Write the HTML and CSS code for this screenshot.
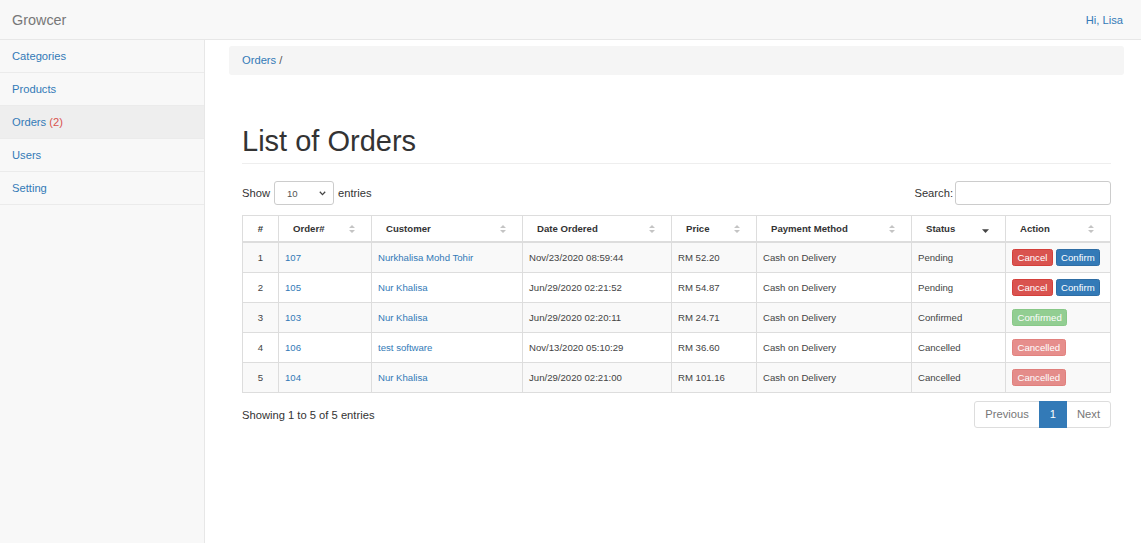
FILE: index.html
```html
<!DOCTYPE html>
<html lang="en">
<head>
<meta charset="utf-8">
<title>Growcer - Orders</title>
<link rel="stylesheet" href="styles.css">
</head>
<body>
<header class="navbar">
  <span class="brand">Growcer</span>
  <a class="greeting" href="#">Hi, Lisa</a>
</header>
<div class="layout">
  <nav class="sidebar">
    <a class="nav-item" href="#">Categories</a>
    <a class="nav-item" href="#">Products</a>
    <a class="nav-item active" href="#">Orders <span class="count">(2)</span></a>
    <a class="nav-item" href="#">Users</a>
    <a class="nav-item" href="#">Setting</a>
  </nav>
  <main class="main">
    <div class="breadcrumb"><a href="#">Orders</a> <span class="sep">/</span></div>
    <div class="content">
      <div class="page-header"><h1>List of Orders</h1></div>
      <div class="toolbar">
        <div class="length">
          <span>Show</span>
          <div class="select"><span>10</span>
            <svg width="7" height="5" viewBox="0 0 7 5"><path d="M0.8 0.8 L3.5 3.6 L6.2 0.8" fill="none" stroke="#444" stroke-width="1.3"/></svg>
          </div>
          <span>entries</span>
        </div>
        <div class="search"><span>Search:</span><div class="input"></div></div>
      </div>
      <table class="orders">
        <colgroup>
          <col style="width:36px"><col style="width:93px"><col style="width:151px"><col style="width:149px"><col style="width:85px"><col style="width:155px"><col style="width:94px"><col style="width:105px">
        </colgroup>
        <thead>
          <tr>
            <th class="num">#</th>
            <th>Order#<svg class="sort" width="6" height="9" viewBox="0 0 6 9"><path d="M0 3.6 L3 0.4 L6 3.6Z M0 5.4 L3 8.6 L6 5.4Z" fill="#c4c4c4"/></svg></th>
            <th>Customer<svg class="sort" width="6" height="9" viewBox="0 0 6 9"><path d="M0 3.6 L3 0.4 L6 3.6Z M0 5.4 L3 8.6 L6 5.4Z" fill="#c4c4c4"/></svg></th>
            <th>Date Ordered<svg class="sort" width="6" height="9" viewBox="0 0 6 9"><path d="M0 3.6 L3 0.4 L6 3.6Z M0 5.4 L3 8.6 L6 5.4Z" fill="#c4c4c4"/></svg></th>
            <th>Price<svg class="sort" width="6" height="9" viewBox="0 0 6 9"><path d="M0 3.6 L3 0.4 L6 3.6Z M0 5.4 L3 8.6 L6 5.4Z" fill="#c4c4c4"/></svg></th>
            <th>Payment Method<svg class="sort" width="6" height="9" viewBox="0 0 6 9"><path d="M0 3.6 L3 0.4 L6 3.6Z M0 5.4 L3 8.6 L6 5.4Z" fill="#c4c4c4"/></svg></th>
            <th>Status<svg class="sort" width="7" height="9" viewBox="0 0 7 9"><path d="M0 4.8 L3.5 8.4 L7 4.8Z" fill="#444"/></svg></th>
            <th>Action<svg class="sort" width="6" height="9" viewBox="0 0 6 9"><path d="M0 3.6 L3 0.4 L6 3.6Z M0 5.4 L3 8.6 L6 5.4Z" fill="#c4c4c4"/></svg></th>
          </tr>
        </thead>
        <tbody>
          <tr>
            <td class="num">1</td><td><a href="#">107</a></td><td><a href="#">Nurkhalisa Mohd Tohir</a></td><td>Nov/23/2020 08:59:44</td><td>RM 52.20</td><td>Cash on Delivery</td><td>Pending</td>
            <td><span class="btn danger">Cancel</span> <span class="btn primary">Confirm</span></td>
          </tr>
          <tr>
            <td class="num">2</td><td><a href="#">105</a></td><td><a href="#">Nur Khalisa</a></td><td>Jun/29/2020 02:21:52</td><td>RM 54.87</td><td>Cash on Delivery</td><td>Pending</td>
            <td><span class="btn danger">Cancel</span> <span class="btn primary">Confirm</span></td>
          </tr>
          <tr>
            <td class="num">3</td><td><a href="#">103</a></td><td><a href="#">Nur Khalisa</a></td><td>Jun/29/2020 02:20:11</td><td>RM 24.71</td><td>Cash on Delivery</td><td>Confirmed</td>
            <td><span class="btn success disabled">Confirmed</span></td>
          </tr>
          <tr>
            <td class="num">4</td><td><a href="#">106</a></td><td><a href="#">test software</a></td><td>Nov/13/2020 05:10:29</td><td>RM 36.60</td><td>Cash on Delivery</td><td>Cancelled</td>
            <td><span class="btn danger disabled">Cancelled</span></td>
          </tr>
          <tr>
            <td class="num">5</td><td><a href="#">104</a></td><td><a href="#">Nur Khalisa</a></td><td>Jun/29/2020 02:21:00</td><td>RM 101.16</td><td>Cash on Delivery</td><td>Cancelled</td>
            <td><span class="btn danger disabled">Cancelled</span></td>
          </tr>
        </tbody>
      </table>
      <div class="footer">
        <span>Showing 1 to 5 of 5 entries</span>
        <ul class="pagination">
          <li class="disabled">Previous</li>
          <li class="active">1</li>
          <li class="disabled">Next</li>
        </ul>
      </div>
    </div>
  </main>
</div>
</body>
</html>
```

FILE: styles.css
```css
* { box-sizing: border-box; }
html, body { margin: 0; padding: 0; }
body {
  font-family: "Liberation Sans", Arial, sans-serif;
  font-size: 11.2px;
  color: #333;
  background: #fff;
}
a { color: #337ab7; text-decoration: none; }

.navbar {
  height: 40px;
  background: #f8f8f8;
  border-bottom: 1px solid #e7e7e7;
  display: flex;
  align-items: center;
  justify-content: space-between;
  padding: 0 18px 0 12px;
}
.brand { font-size: 14.4px; color: #777; }
.greeting { font-size: 11.2px; }

.layout { display: flex; min-height: 503px; }

.sidebar {
  width: 205px;
  flex: 0 0 205px;
  background: #f8f8f8;
  border-right: 1px solid #e7e7e7;
  display: flex;
  flex-direction: column;
}
.nav-item {
  display: block;
  padding: 8px 12px;
  line-height: 16px;
  border-bottom: 1px solid #ebebeb;
}
.nav-item.active { background: #eee; }
.count { color: #d9534f; }

.main { flex: 1; padding: 6px 18px 0 24px; }
.breadcrumb {
  background: #f5f5f5;
  border-radius: 3px;
  padding: 6px 13px;
  line-height: 17px;
}
.sep { color: #555; }

.content { padding: 0 13px; }
.page-header {
  margin: 50px 0 17px;
  padding-bottom: 6px;
  border-bottom: 1px solid #eee;
}
.page-header h1 {
  margin: 0;
  font-size: 29px;
  line-height: 32px;
  font-weight: normal;
  color: #333;
}

.toolbar {
  display: flex;
  justify-content: space-between;
  align-items: center;
  height: 24px;
  margin-bottom: 10px;
}
.length { display: flex; align-items: center; gap: 4px; }
.select {
  width: 60px;
  height: 24px;
  border: 1px solid #ccc;
  border-radius: 3px;
  display: flex;
  align-items: center;
  justify-content: space-between;
  padding: 0 7px 0 12px;
  font-size: 9.6px;
  color: #555;
}
.search { display: flex; align-items: center; gap: 2px; }
.input {
  width: 156px;
  height: 24px;
  border: 1px solid #ccc;
  border-radius: 3px;
}

.orders {
  width: 100%;
  border-collapse: collapse;
  table-layout: fixed;
  font-size: 9.6px;
}
.orders th, .orders td {
  border: 1px solid #ddd;
  text-align: left;
  white-space: nowrap;
}
.orders th {
  position: relative;
  padding: 6px 24px 5px 14px;
  line-height: 14px;
  font-weight: bold;
  border-bottom: 2px solid #ddd;
}
.orders td {
  padding: 6px;
  line-height: 17px;
  color: #444;
}
.orders .num { text-align: center; padding-left: 6px; padding-right: 6px; }
.orders tbody tr:nth-child(odd) td { background: #f9f9f9; }
.sort {
  position: absolute;
  right: 16px;
  top: 50%;
  transform: translateY(-50%);
}

.btn {
  display: inline-block;
  padding: 0 4.5px;
  line-height: 15px;
  border: 1px solid transparent;
  border-radius: 2.4px;
  color: #fff;
  font-size: 9.6px;
  vertical-align: top;
}
.btn.danger { background: #d9534f; border-color: #d43f3a; }
.btn.primary { background: #337ab7; border-color: #2e6da4; }
.btn.success { background: #5cb85c; border-color: #4cae4c; }
.btn.disabled { opacity: 0.65; }

.footer {
  display: flex;
  justify-content: space-between;
  align-items: center;
  margin-top: 8px;
}
.pagination {
  display: flex;
  list-style: none;
  margin: 0;
  padding: 0;
}
.pagination li {
  height: 27px;
  line-height: 25px;
  padding: 0 10px;
  border: 1px solid #ddd;
  margin-left: -1px;
  color: #337ab7;
  background: #fff;
}
.pagination li:first-child { border-radius: 3px 0 0 3px; margin-left: 0; }
.pagination li:last-child { border-radius: 0 3px 3px 0; }
.pagination li.disabled { color: #777; }
.pagination li.active { background: #337ab7; border-color: #337ab7; color: #fff; position: relative; }
```
